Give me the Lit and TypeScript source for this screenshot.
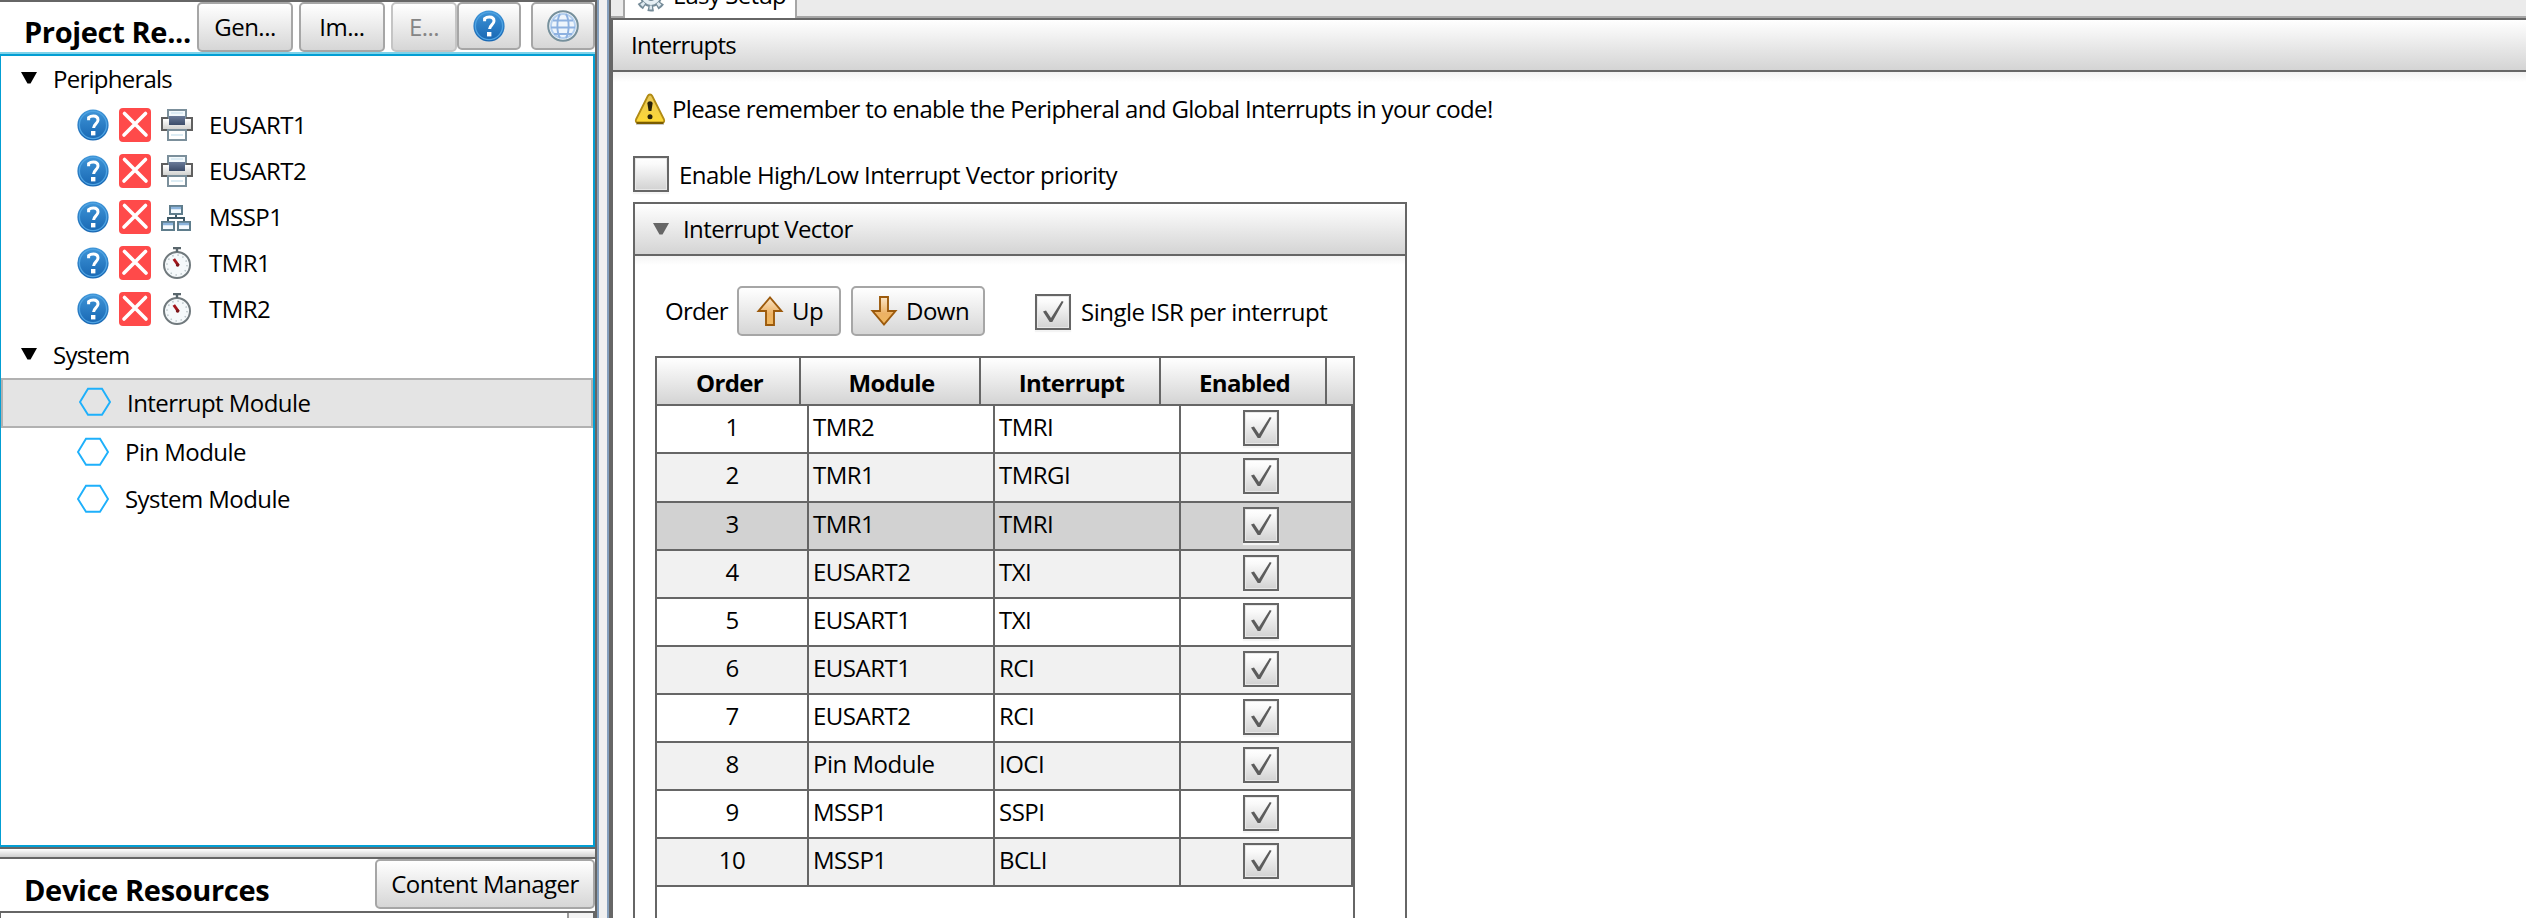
import { LitElement, html, css, nothing } from "lit";
import { customElement, property } from "lit/decorators.js";
import { classMap } from "lit/directives/class-map.js";

const helpIcon = html`<svg class="icon" width="32" height="32" viewBox="0 0 32 32">
  <defs><linearGradient id="hg" x1="0" y1="0" x2="0" y2="1"><stop offset="0" stop-color="#3f95d8"/><stop offset="1" stop-color="#1766b2"/></linearGradient></defs>
  <circle cx="16" cy="16" r="15.6" fill="url(#hg)"/>
  <circle cx="16" cy="16" r="13.6" fill="none" stroke="#4fa3e2" stroke-width="1.3"/>
  <path d="M11.6 11.2V8.6C13 7.4 14.6 7 16.4 7c3 0 4.600 1.600 4.600 4 0 3.600-4.400 4.200-4.400 8" fill="none" stroke="#fff" stroke-width="3"/>
  <rect x="14" y="22" width="4.400" height="4.400" fill="#fff"/>
</svg>`;

const globeIcon = html`<svg class="icon" width="32" height="32" viewBox="0 0 32 32">
  <circle cx="16" cy="16" r="14.800" fill="#eef5fc" stroke="#76909c" stroke-width="2"/>
  <g fill="none" stroke="#8db1e0" stroke-width="1.900">
    <circle cx="16" cy="16" r="12" stroke="#b4cfee"/>
    <path d="M6 10.500h20M4 17.500h24M7 24h18M13 4C9.500 10 9.500 22 13 28M19 4c3.500 6 3.500 18 0 24"/>
  </g>
</svg>`;

const removeIcon = html`<svg class="icon" width="32" height="34" viewBox="0 0 32 34">
  <rect width="32" height="34" rx="4" fill="#ff4a4a"/>
  <path d="M5.500 5.500L27 27M26.500 5.500L5 27" stroke="#fff" stroke-width="3.600" stroke-linecap="round"/>
</svg>`;

const printerIcon = html`<svg class="icon" width="32" height="32" viewBox="0 0 32 32">
  <defs><linearGradient id="pg" x1="0" y1="0" x2="0" y2="1"><stop offset="0" stop-color="#fff"/><stop offset="1" stop-color="#d2d2d0"/></linearGradient>
  <linearGradient id="pd" x1="0" y1="0" x2="0" y2="1"><stop offset="0" stop-color="#6a7b99"/><stop offset="1" stop-color="#3c4c69"/></linearGradient></defs>
  <rect x="7" y="1" width="18" height="14" fill="#f2f9fc" stroke="#7b8f9b" stroke-width="2"/>
  <path d="M7 9H1v12h6M25 9h6v12h-6" fill="none" stroke="#5f5f5f" stroke-width="2"/>
  <rect x="2" y="10" width="28" height="10" fill="url(#pg)"/>
  <rect x="8" y="7" width="16" height="9" fill="url(#pd)"/>
  <rect x="7" y="21" width="18" height="10" fill="#fff" stroke="#7b8f9b" stroke-width="2"/>
  <path d="M10 4h12M10 26h12" stroke="#dcecf4" stroke-width="2"/>
</svg>`;

const networkIcon = html`<svg class="icon" width="32" height="32" viewBox="0 0 32 32">
  <g fill="#f6fbff" stroke="#5f7d8c" stroke-width="2">
    <rect x="9" y="5" width="12" height="8"/><rect x="1" y="21" width="12" height="8"/><rect x="17" y="21" width="12" height="8"/>
  </g>
  <path d="M10 7h10M2 23h10M18 23h10" stroke="#8cb4dc" stroke-width="2.400"/>
  <path d="M15 14v3M7 20v-3h16v3" fill="none" stroke="#3f5a68" stroke-width="2"/>
</svg>`;

const timerIcon = html`<svg class="icon" width="32" height="32" viewBox="0 0 32 32">
  <circle cx="16" cy="18" r="13" fill="#f5f9fb" stroke="#70797d" stroke-width="2"/>
  <circle cx="16" cy="18" r="10" fill="none" stroke="#b9c4c8" stroke-width="1.500" stroke-dasharray="1.500 3.740"/>
  <path d="M12 1h8M16 1v4" stroke="#59666c" stroke-width="2.400"/>
  <path d="M12.800 12l4.600 6.500" stroke="#a4161c" stroke-width="3"/>
  <circle cx="16.600" cy="18" r="1.800" fill="#7c1519"/>
</svg>`;

const hexIcon = html`<svg class="icon" width="32" height="30" viewBox="0 0 32 30">
  <path d="M9 1.700h14l8 13.300-8 12.800H9L1 15z" fill="none" stroke="#1eb0fb" stroke-width="1.900"/>
</svg>`;

const warnIcon = html`<svg class="icon" width="32" height="32" viewBox="0 0 32 32">
  <defs><linearGradient id="wg" x1="0" y1="0" x2="0" y2="1"><stop offset="0" stop-color="#e6c65a"/><stop offset="1" stop-color="#ffd934"/></linearGradient></defs>
  <path d="M2 31.500h28" stroke="#c9c9c9" stroke-width="1.500"/>
  <path d="M16 1.500c1 0 1.700.5 2.200 1.500L30 26.500c.6 1.400 0 3-1.500 3h-25c-1.500 0-2.100-1.600-1.500-3L13.800 3c.5-1 1.200-1.500 2.200-1.500z" fill="url(#wg)" stroke="#b18b14" stroke-width="1.800"/>
  <path d="M2.500 30h27" stroke="#7b5c00" stroke-width="2"/>
  <path d="M13.400 10.500c0-3 5.200-3 5.200 0L17.400 18h-2.800z" fill="#26200c"/>
  <circle cx="16" cy="23.800" r="2.500" fill="#26200c"/>
</svg>`;

const arrow = (down: boolean) => html`<svg class="icon" width="28" height="32" viewBox="0 0 28 32">
  <defs><linearGradient id="ag" x1="0" y1="0" x2="0" y2="1"><stop offset="0" stop-color="#fbe6c8"/><stop offset=".6" stop-color="#ecb164"/><stop offset="1" stop-color="#f0b85e"/></linearGradient></defs>
  <path d=${down ? "M10 2h8v14h7.500L14 29.500 2.500 16H10z" : "M10 30h8V16h7.500L14 2.500 2.500 16H10z"} fill="url(#ag)" stroke="#9c5a0c" stroke-width="1.900"/>
</svg>`;

const gearIcon = html`<svg class="icon" width="32" height="32" viewBox="0 0 32 32">
  <circle cx="16" cy="16" r="12.500" fill="none" stroke="#758b98" stroke-width="6" stroke-dasharray="6 3.820" stroke-dashoffset="3" transform="rotate(90 16 16)"/>
  <circle cx="16" cy="16" r="10" fill="#e6eff4" stroke="#758b98" stroke-width="2"/>
  <circle cx="16" cy="16" r="11.500" fill="none" stroke="#dfeaf0" stroke-width="4" stroke-dasharray="3 6.030" stroke-dashoffset="1.500" transform="rotate(90 16 16)"/>
  <circle cx="16" cy="16" r="4" fill="#fff" stroke="#758b98" stroke-width="2"/>
</svg>`;

const triangle = html`<svg class="icon" width="16" height="12" viewBox="0 0 16 12"><path d="M0 0h16L9.500 11.500h-3z" fill="currentColor"/></svg>`;

const deviceIcons: Record<string, unknown> = { printer: printerIcon, network: networkIcon, timer: timerIcon };

@customElement("check-box")
class CheckBox extends LitElement {
  @property({ type: Boolean }) checked = false;
  static styles = css`
    :host { display: block; flex: none; width: 36px; height: 36px; }
    .box { box-sizing: border-box; width: 36px; height: 36px; border: 2px solid #666; background: linear-gradient(#fff, #fafafa 20%, #d2d2d2); box-shadow: inset 0 0 0 1px #e8e8e8, 0 2px 1px #f4f4f4; }
    svg { display: block; }
  `;
  render() {
    return html`<div class="box">${this.checked
      ? html`<svg width="32" height="32" viewBox="0 0 32 32"><path d="M6 15.500l3-1 5 7.500L24.800 5l1.800.8L15.300 26h-2.600z" fill="#5c5c5c"/></svg>`
      : nothing}</div>`;
  }
}

@customElement("project-tree")
class ProjectTree extends LitElement {
  static styles = css`
    :host { display: block; box-sizing: border-box; height: 793px; flex: none; border: solid #039ed3; border-width: 2px 2px 2px 1px; background: #fff; letter-spacing: -0.55px; }
    .row { display: flex; align-items: center; height: 46px; line-height: 46px; white-space: nowrap; box-sizing: border-box; }
    .group { padding-left: 20px; letter-spacing: -0.75px; }
    .group .icon { margin-right: 16px; margin-bottom: 3px; }
    .leaf { padding-left: 76px; }
    .leaf .icon { margin-right: 10px; }
    .leaf .name { margin-left: 6px; }
    .module { height: 47px; line-height: 47px; padding-left: 76px; }
    .module .icon { margin-right: 16px; }
    .selected { height: 50px; border: 2px solid #b1b1b1; background: #e4e4e4; }
    .module.selected { line-height: 48px; }
    .selected .icon { margin-bottom: 2px; }
    .icon { display: block; flex: none; }
  `;
  private peripherals = [
    ["EUSART1", "printer"], ["EUSART2", "printer"], ["MSSP1", "network"], ["TMR1", "timer"], ["TMR2", "timer"],
  ];
  private modules = ["Interrupt Module", "Pin Module", "System Module"];
  render() {
    return html`
      <div class="row group">${triangle}<span>Peripherals</span></div>
      ${this.peripherals.map(([name, icon]) => html`<div class="row leaf">${helpIcon}${removeIcon}${deviceIcons[icon]}<span class="name">${name}</span></div>`)}
      <div class="row group">${triangle}<span>System</span></div>
      ${this.modules.map((name, i) => html`<div class=${classMap({ row: true, module: true, selected: i === 0 })}>${hexIcon}<span>${name}</span></div>`)}
    `;
  }
}

@customElement("interrupt-table")
class InterruptTable extends LitElement {
  static styles = css`
    :host { display: block; box-sizing: border-box; width: 700px; border: solid #666; border-width: 2px 2px 0 2px; background: #fff; }
    .head { display: grid; grid-template-columns: 144px 180px 180px 166px 26px; grid-template-rows: 46px; height: 48px; box-sizing: border-box; border-bottom: 2px solid #666; font-weight: 700; text-align: center; line-height: 48px; letter-spacing: -0.65px; }
    .head span { box-sizing: border-box; padding: 1px 0 0 3px; border-right: 2px solid #666; background: linear-gradient(#fff, #d4d4d4); }
    .head span:last-child { border-right: 0; }
    .row { display: grid; grid-template-columns: 152px 186px 186px 172px; grid-template-rows: 1fr; height: 48px; box-sizing: border-box; border-bottom: 2px solid #666; line-height: 42px; background: #fff; }
    .row:nth-child(odd) { background: #f1f1f1; }
    .row:nth-child(3) { height: 49px; }
    .row.current { background: #d2d2d2; }
    .row span { box-sizing: border-box; border-right: 2px solid #666; padding-left: 4px; }
    .row .num { text-align: center; padding: 0; }
    .row .on { display: flex; justify-content: center; padding: 4px 10px 0 0; }
  `;
  private rows: [string, string][] = [
    ["TMR2", "TMRI"], ["TMR1", "TMRGI"], ["TMR1", "TMRI"], ["EUSART2", "TXI"], ["EUSART1", "TXI"],
    ["EUSART1", "RCI"], ["EUSART2", "RCI"], ["Pin Module", "IOCI"], ["MSSP1", "SSPI"], ["MSSP1", "BCLI"],
  ];
  render() {
    return html`
      <div class="head"><span>Order</span><span>Module</span><span>Interrupt</span><span>Enabled</span><span></span></div>
      ${this.rows.map(([mod, irq], i) => html`<div class=${classMap({ row: true, current: i === 2 })}>
        <span class="num">${i + 1}</span><span>${mod}</span><span>${irq}</span><span class="on"><check-box checked></check-box></span>
      </div>`)}
    `;
  }
}

@customElement("app-root")
class AppRoot extends LitElement {
  static styles = css`
    :host { display: grid; grid-template-columns: 597px 12px 1fr; height: 918px; overflow: hidden; background: #fff; color: #000; font: 24px/32px "Open Sans", "Noto Sans", sans-serif; letter-spacing: -0.5px; white-space: nowrap; }
    .icon { display: block; flex: none; }
    .left { display: flex; flex-direction: column; border-top: 2px solid #666; border-right: 2px solid #666; box-sizing: border-box; min-width: 0; }
    .bar { display: flex; align-items: flex-start; height: 50px; padding-left: 24px; }
    h1, h2 { margin: 0; font-size: 29px; font-weight: 700; line-height: 32px; letter-spacing: -0.35px; }
    h1 { width: 173px; padding-top: 14px; }
    .btn { display: flex; align-items: center; justify-content: center; box-sizing: border-box; height: 50px; border: 2px solid #a6a6a6; border-radius: 5px; background: linear-gradient(#fff, #d6d6d6); line-height: 46px; }
    .gen { width: 96px; margin-right: 6px; }
    .imp { width: 86px; margin-right: 6px; }
    .exp { width: 66px; color: #858585; border-color: #c4c4c4; }
    .sq { width: 64px; height: 48px; }
    .sq + .sq { margin-left: 10px; }
    .glow { flex: none; height: 2px; background: #7fd3ea; }
    .split { flex: none; height: 12px; box-sizing: border-box; border: solid #666; border-width: 2px 0; background: linear-gradient(#fff, #cfcfcf); }
    .device { flex: none; display: flex; justify-content: space-between; height: 52px; padding-left: 24px; }
    h2 { padding-top: 15px; }
    .manager { width: 220px; }
    .list { flex: 1; box-sizing: border-box; border: solid #666; border-width: 2px 2px 0 1px; display: flex; justify-content: flex-end; }
    .scroll { width: 26px; box-sizing: border-box; border-left: 2px solid #999; background: #f3f3f3; }
    .gutter { box-sizing: border-box; border: solid #86a0bd; border-width: 0 2px; background: #f0f0f0; }
    .right { display: flex; flex-direction: column; min-width: 0; overflow: hidden; }
    .tabs { display: flex; flex: none; height: 18px; border-left: 2px solid #666; background: #ebebeb; }
    .gap { width: 14px; box-sizing: border-box; border: solid #a6a6a6; border-width: 0 2px 2px 0; }
    .tab { display: flex; align-items: flex-end; width: 172px; height: 18px; box-sizing: border-box; padding-left: 10px; gap: 6px; border-right: 2px solid #a6a6a6; background: #fff; letter-spacing: -0.8px; }
    .tab .icon { margin-bottom: 6px; }
    .tab span { line-height: 32px; margin-bottom: 7px; }
    .rest { flex: 1; box-sizing: border-box; border-bottom: 2px solid #a6a6a6; }
    .body { flex: 1; border-left: 4px solid #666; min-height: 0; }
    .title { height: 54px; box-sizing: border-box; border: solid #666; border-width: 2px 0; padding-left: 18px; line-height: 50px; letter-spacing: -0.75px; background: linear-gradient(#fff, #d4d4d4); }
    .content { padding-left: 20px; background: linear-gradient(#f1f1f1, #fff 10px); }
    .warn { display: flex; align-items: center; height: 74px; gap: 6px; padding-left: 1px; letter-spacing: -0.66px; }
    .prio { display: flex; align-items: center; margin-top: 10px; gap: 10px; height: 36px; letter-spacing: -0.56px; }
    .prio span { padding-top: 2px; }
    .panel { width: 774px; box-sizing: border-box; border: 2px solid #666; margin-top: 10px; height: 760px; }
    .panelhead { display: flex; align-items: center; height: 52px; box-sizing: border-box; border-bottom: 2px solid #666; padding-left: 18px; gap: 14px; line-height: 50px; background: linear-gradient(#fff, #d4d4d4); color: #666; letter-spacing: -0.6px; }
    .panelhead span { color: #000; }
    .inner { padding: 30px 0 0 20px; background: linear-gradient(#f4f4f4, #fff 9px); }
    .tools { display: flex; align-items: center; height: 50px; margin-bottom: 20px; padding-left: 10px; }
    .tools .btn { flex: none; justify-content: flex-start; padding-left: 17px; gap: 8px; }
    .label { width: 72px; flex: none; letter-spacing: -0.7px; }
    .up { width: 104px; margin-right: 10px; }
    .down { width: 134px; margin-right: 50px; }
    .isr { display: flex; align-items: center; gap: 10px; padding-top: 2px; }
    interrupt-table { height: 600px; }
  `;
  render() {
    return html`
      <div class="left">
        <div class="bar">
          <h1>Project Re...</h1>
          <div class="btn gen">Gen...</div><div class="btn imp">Im...</div><div class="btn exp">E...</div>
          <div class="btn sq">${helpIcon}</div><div class="btn sq">${globeIcon}</div>
        </div>
        <div class="glow"></div>
        <project-tree></project-tree>
        <div class="split"></div>
        <div class="device"><h2>Device Resources</h2><div class="btn manager">Content Manager</div></div>
        <div class="list"><div class="scroll"></div></div>
      </div>
      <div class="gutter"></div>
      <div class="right">
        <div class="tabs"><div class="gap"></div><div class="tab">${gearIcon}<span>Easy Setup</span></div><div class="rest"></div></div>
        <div class="body">
          <div class="title">Interrupts</div>
          <div class="content">
            <div class="warn">${warnIcon}<span>Please remember to enable the Peripheral and Global Interrupts in your code!</span></div>
            <div class="prio"><check-box></check-box><span>Enable High/Low Interrupt Vector priority</span></div>
            <div class="panel">
              <div class="panelhead">${triangle}<span>Interrupt Vector</span></div>
              <div class="inner">
                <div class="tools"><span class="label">Order</span>
                  <div class="btn up">${arrow(false)}<span>Up</span></div>
                  <div class="btn down">${arrow(true)}<span>Down</span></div>
                  <div class="isr"><check-box checked></check-box><span>Single ISR per interrupt</span></div>
                </div>
                <interrupt-table></interrupt-table>
              </div>
            </div>
          </div>
        </div>
      </div>
    `;
  }
}
